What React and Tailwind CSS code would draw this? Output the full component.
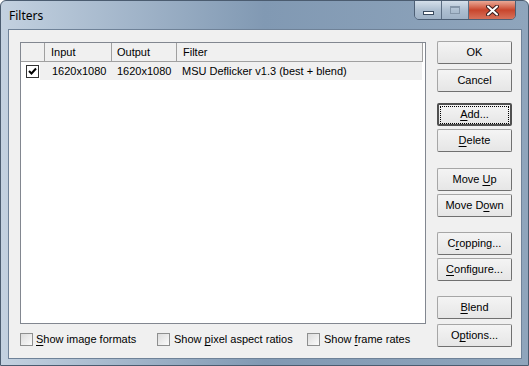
import React from "react";

const U = ({ children }) => <span className="underline underline-offset-2">{children}</span>;

function Btn({ children, top, def }) {
  return (
    <div
      className={
        "h-[23px] w-[75px] flex items-center justify-center rounded-[2px] border bg-gradient-to-b from-[#f4f4f4] to-[#e6e6e6] text-[11px] text-black " +
        (def ? "border-[#505050] border-2" : "border-[#a6a6a6] border-b-[#707070] border-r-[#707070]")
      }
      style={{ marginTop: top }}
    >
      {def ? (
        <span className="px-[5px] py-[1px] outline-1 outline-dotted outline-black flex items-center justify-center w-[67px] h-[16px]">
          {children}
        </span>
      ) : (
        children
      )}
    </div>
  );
}

function Check({ checked }) {
  return (
    <div className={"w-[13px] h-[13px] shrink-0 border flex items-center justify-center " + (checked ? "border-[#333] bg-white" : "border-[#8e8f8f] bg-gradient-to-br from-[#dcdcdc] to-[#fbfbfb]")}>
      {checked && (
        <svg width="9" height="9" viewBox="0 0 9 9">
          <path d="M1 4 L3.5 6.5 L8 1.5" stroke="#000" strokeWidth="2" fill="none" />
        </svg>
      )}
    </div>
  );
}

export default function App() {
  return (
    <div
      className="w-[529px] h-[366px] relative overflow-hidden rounded-t-[6px] border border-[#4b5c70] bg-gradient-to-r from-[#c3d1e0] via-[#8199b3] to-[#8fa5bc]"
      style={{ fontFamily: "Tahoma, 'Liberation Sans', Arial, sans-serif" }}
    >
      {/* title bar */}
      <div className="h-[28px] flex items-start">
        <div className="pl-[8px] pt-[6px] text-[12px] text-black" style={{ fontFamily: "'Noto Sans', 'Liberation Sans', sans-serif" }}>
          Filters
        </div>
      </div>
      {/* caption buttons */}
      <div className="absolute top-[-1px] right-[12px] flex h-[20px] rounded-b-[5px] border border-[#4d5f75] overflow-hidden">
        <div className="w-[27px] flex items-center justify-center border-r border-[#5b6d82] bg-gradient-to-b from-[#d4dfea] via-[#aebfd1] to-[#9fb2c6]">
          <div className="w-[11px] h-[4px] mt-[5px] bg-white border border-[#3a4a5e]" />
        </div>
        <div className="w-[27px] flex items-center justify-center border-r border-[#5b6d82] bg-gradient-to-b from-[#d4dfea] via-[#aebfd1] to-[#9fb2c6]">
          <div className="w-[10px] h-[8px] border border-[#8596a9] border-t-2" />
        </div>
        <div className="w-[46px] flex items-center justify-center bg-gradient-to-b from-[#e9a896] via-[#c8452c] to-[#d6715a]">
          <svg width="13" height="11" viewBox="0 0 13 11">
            <path d="M2 1.5 L11 9.5 M11 1.5 L2 9.5" stroke="#3d2020" strokeWidth="4" strokeLinecap="round" />
            <path d="M2 1.5 L11 9.5 M11 1.5 L2 9.5" stroke="#fff" strokeWidth="2" strokeLinecap="round" />
          </svg>
        </div>
      </div>
      {/* client */}
      <div className="absolute left-[7px] top-[28px] w-[514px] h-[330px] border border-[#6f8298] bg-[#f0f0f0] flex pl-[11px] pt-[12px]">
        <div className="flex flex-col w-[406px]">
          <div className="h-[282px] border border-[#828790] bg-white flex flex-col">
            <div className="h-[19px] flex text-[11px] text-black bg-[#f0f0f0] border-b border-[#a0a0a0] mr-[2px]">
              <div className="w-[24px] border-r border-[#a0a0a0]" />
              <div className="w-[67px] border-r border-[#a0a0a0] pl-[6px] leading-[18px]">Input</div>
              <div className="w-[65px] border-r border-[#a0a0a0] pl-[5px] leading-[18px]">Output</div>
              <div className="flex-1 border-r border-[#a0a0a0] pl-[6px] leading-[18px]">Filter</div>
            </div>
            <div className="h-[18px] flex items-center text-[11px] text-black">
              <div className="pl-[5px]">
                <Check checked />
              </div>
              <div className="flex-1 ml-[1px] mr-[3px] h-full bg-[#f0f0f0] flex items-center">
                <div className="w-[77px] pl-[12px]">1620x1080</div>
                <div className="w-[65px]">1620x1080</div>
                <div>MSU Deflicker v1.3 (best + blend)</div>
              </div>
            </div>
          </div>
          <div className="flex items-center mt-[7px] text-[11px] text-black">
            <div className="w-[137px] flex items-center whitespace-nowrap">
              <Check />
              <span className="ml-[3px]"><U>S</U>how image formats</span>
            </div>
            <div className="w-[150px] flex items-center whitespace-nowrap">
              <Check />
              <span className="ml-[4px]">Show <U>p</U>ixel aspect ratios</span>
            </div>
            <div className="flex items-center whitespace-nowrap">
              <Check />
              <span className="ml-[4px]">Show <U>f</U>rame rates</span>
            </div>
          </div>
        </div>
        <div className="flex flex-col ml-[11px] mt-[-1px]">
          <Btn top={0}>OK</Btn>
          <Btn top={5}>Cancel</Btn>
          <Btn top={11} def><span><U>A</U>dd...</span></Btn>
          <Btn top={3}><span><U>D</U>elete</span></Btn>
          <Btn top={16}><span>Move <U>U</U>p</span></Btn>
          <Btn top={3}><span>Move D<U>o</U>wn</span></Btn>
          <Btn top={15}><span>C<U>r</U>opping...</span></Btn>
          <Btn top={3}><span><U>C</U>onfigure...</span></Btn>
          <Btn top={15}><span><U>B</U>lend</span></Btn>
          <Btn top={5}><span>O<U>p</U>tions...</span></Btn>
        </div>
      </div>
    </div>
  );
}
